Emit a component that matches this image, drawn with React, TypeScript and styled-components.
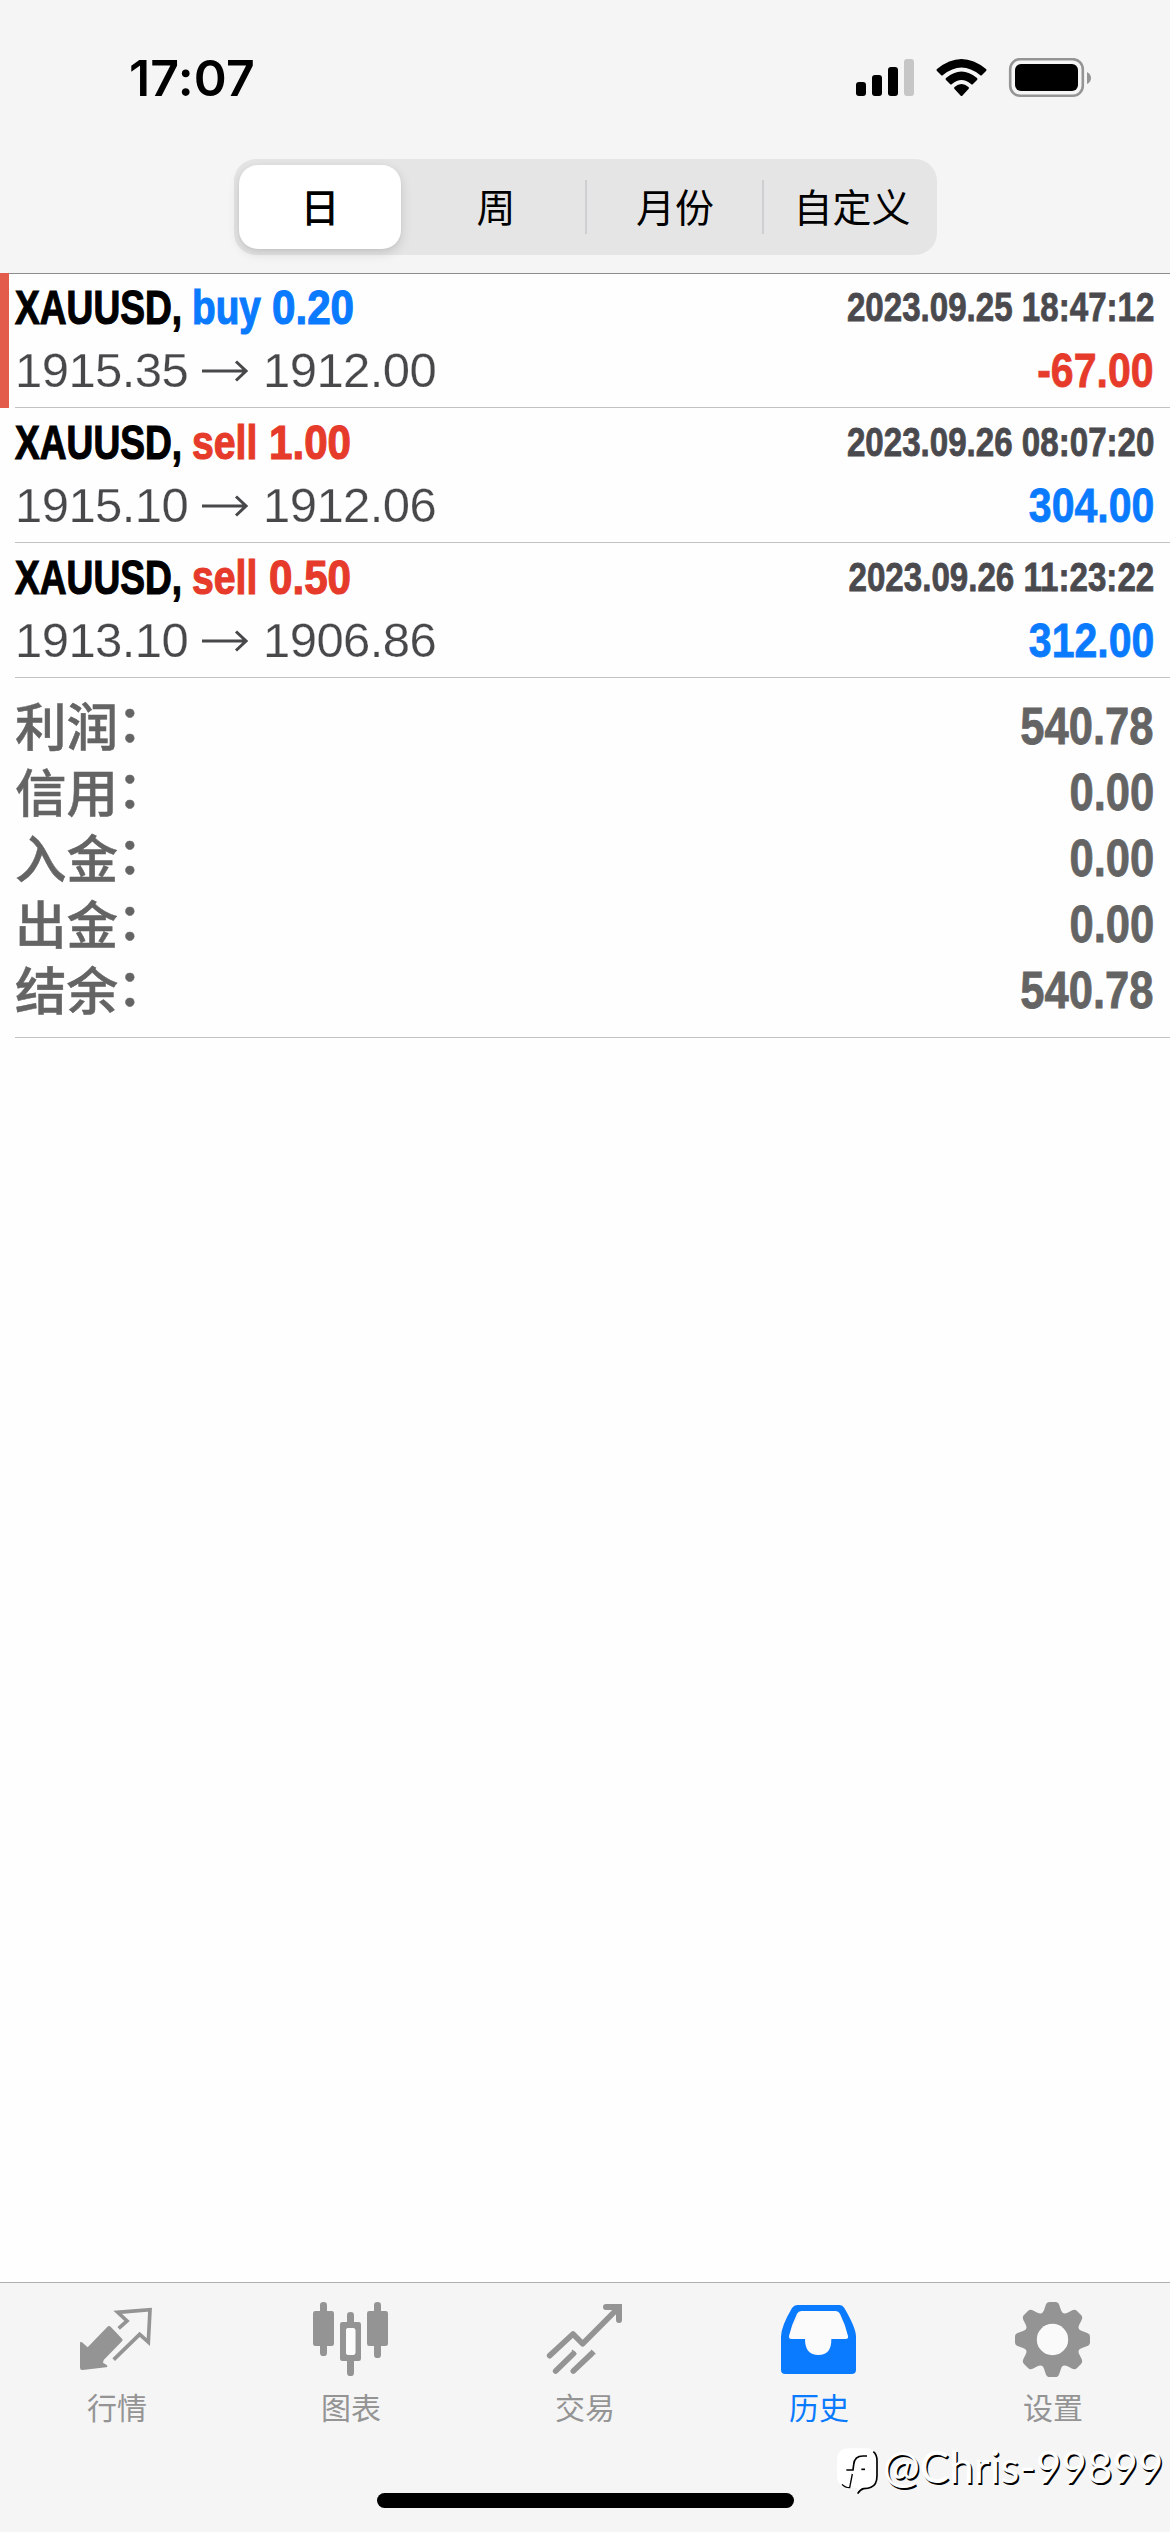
import React from 'react';
import styled, { createGlobalStyle, css } from 'styled-components';

const BLUE = '#0a7aff';
const RED = '#e63b2b';
const GREY = '#949494';

const GlobalStyle = createGlobalStyle`
  * { box-sizing: border-box; }
  html, body { margin: 0; padding: 0; background: #fff; }
  body { font-family: 'Liberation Sans', 'Noto Sans CJK SC', sans-serif; }
`;

const Screen = styled.div`
  width: 1170px;
  height: 2532px;
  display: flex;
  flex-direction: column;
  background: #fefefe;
  overflow: hidden;
`;

const Header = styled.header`
  height: 274px;
  flex: none;
  background: #f5f5f5;
  border-bottom: 1px solid #8c8c8c;
`;

const StatusBar = styled.div`
  height: 159px;
  display: flex;
  justify-content: space-between;
  padding: 0 78px 3px 129px;
  align-items: center;
`;

const Clock = styled.time`
  font: 600 50px/60px Inter, 'Liberation Sans', sans-serif;
  letter-spacing: 0.2px;
  color: #000;
`;

const StatusIcons = styled.svg`
  display: block;
  width: 236px;
  height: 40px;
`;

const Segments = styled.nav`
  width: 703px;
  height: 96px;
  margin: 0 0 0 234px;
  padding: 6px 0 6px 5px;
  display: flex;
  border-radius: 22px;
  background: #e5e5e6;
`;

const Segment = styled.button<{ $selected?: boolean; $divider?: boolean }>`
  position: relative;
  flex: none;
  width: 178px;
  height: 84px;
  padding: 0 0 4px;
  border: 0;
  background: transparent;
  color: #000;
  font: 400 39px/80px 'Noto Sans CJK SC', sans-serif;
  ${(p) =>
    p.$selected &&
    css`
      width: 162px;
      margin-right: 6px;
      border-radius: 19px;
      background: #fff;
      font-weight: 500;
      box-shadow: 0 4px 12px rgba(0, 0, 0, 0.14), 0 1px 3px rgba(0, 0, 0, 0.04);
    `}
  ${(p) =>
    p.$divider &&
    css`
      width: 177px;
      padding-left: 3px;
      &::before {
        content: '';
        position: absolute;
        left: 0;
        top: 15px;
        width: 2px;
        height: 54px;
        background: #cfcfd1;
      }
    `}
`;

const Main = styled.main`
  flex: 1;
`;

const Deal = styled.article<{ $marked?: boolean }>`
  height: 135px;
  display: grid;
  grid-template-columns: 15px 1fr;
  background: ${(p) =>
    p.$marked ? 'linear-gradient(90deg, #e25b4b 9px, transparent 9px)' : 'none'};
  margin-top: ${(p) => (p.$marked ? '-1px' : '0')};
`;

const DealBody = styled.div`
  grid-column: 2;
  padding: 3px 16px 0 0;
  border-bottom: 1px solid #c2c2c4;
`;

const Line = styled.div<{ $h: number }>`
  height: ${(p) => p.$h}px;
  display: flex;
  align-items: center;
`;

/* Condensed lettering: $w is the drawn width, $sx the horizontal squeeze. */
const Word = styled.span<{ $w: number; $sx: number; $color: string }>`
  width: ${(p) => p.$w / p.$sx}px;
  margin-right: ${(p) => p.$w - p.$w / p.$sx}px;
  transform: scaleX(${(p) => p.$sx});
  transform-origin: left center;
  white-space: nowrap;
  font: 700 49px/60px 'Liberation Sans', Arial, sans-serif;
  -webkit-text-stroke: 1.2px ${(p) => p.$color};
  color: ${(p) => p.$color};
`;

const Figure = styled.span<{ $size: number; $sx: number; $color: string }>`
  margin-left: auto;
  transform: scaleX(${(p) => p.$sx});
  transform-origin: right center;
  white-space: nowrap;
  font: 700 ${(p) => p.$size}px/60px 'Liberation Sans', Arial, sans-serif;
  -webkit-text-stroke: 0.8px ${(p) => p.$color};
  color: ${(p) => p.$color};
`;

const Price = styled.span`
  width: 173px;
  white-space: nowrap;
  font: 400 49px/60px 'Liberation Sans', Arial, sans-serif;
  letter-spacing: -0.55px;
  color: #48484b;
  -webkit-text-stroke: 0.25px #fefefe;
`;

const Arrow = styled.svg`
  width: 47px;
  height: 22px;
  margin: 2px 15px 0 13px;
`;

const Summary = styled.section`
  height: 360px;
  margin-left: 15px;
  padding: 15px 16px 0 0;
  border-bottom: 1px solid #c2c2c4;
`;

const SummaryLabel = styled.span`
  padding-top: 3px;
  font: 500 51.5px/66px 'Liberation Sans', 'Noto Sans CJK SC', sans-serif;
  -webkit-text-stroke: 0.5px #646464;
  color: #646464;
`;

const Colon = styled.span`
  display: inline-block;
  transform: translate(-1px, -4px);
`;

const TabBar = styled.nav`
  height: 250px;
  flex: none;
  display: grid;
  grid-template-columns: repeat(5, 234px);
  border-top: 1px solid #b0b0b2;
  background: #f5f5f5;
  position: relative;
`;

const Tab = styled.a<{ $active?: boolean }>`
  padding-top: 15px;
  display: flex;
  flex-direction: column;
  align-items: center;
  color: ${(p) => (p.$active ? BLUE : GREY)};
  font: 400 30px/40px 'Noto Sans CJK SC', sans-serif;
`;

const TabIcon = styled.svg`
  width: 100px;
  height: 84px;
  margin-bottom: 4px;
`;

const HomeIndicator = styled.div`
  position: absolute;
  left: 377px;
  bottom: 24px;
  width: 417px;
  height: 15px;
  border-radius: 8px;
  background: #000;
`;

const Watermark = styled.div`
  position: absolute;
  left: 836px;
  top: 162px;
  display: flex;
  align-items: flex-start;
  color: #fff;
  font: 400 44px/43px Lato, sans-serif;
  white-space: nowrap;
  text-shadow: 1.5px 1.5px 0 #000;
`;

const WatermarkLogo = styled.svg`
  width: 46px;
  height: 50px;
  margin-right: 1px;
`;

const deals = [
  { side: 'buy', volume: '0.20', open: '1915.35', close: '1912.00', time: '2023.09.25 18:47:12', profit: '-67.00' },
  { side: 'sell', volume: '1.00', open: '1915.10', close: '1912.06', time: '2023.09.26 08:07:20', profit: '304.00' },
  { side: 'sell', volume: '0.50', open: '1913.10', close: '1906.86', time: '2023.09.26 11:23:22', profit: '312.00' },
];

const totals = [
  ['利润', '540.78'],
  ['信用', '0.00'],
  ['入金', '0.00'],
  ['出金', '0.00'],
  ['结余', '540.78'],
];

const QuotesIcon = () => (
  <TabIcon viewBox="81 84 300 252" fill="currentColor">
    <path d="M204 169q4-3 8 1l34 36q4 4 0 8l-55 56-2 8 11 7q5 5-2 7l-70 8q-8 1-8-7v-72q0-9 6-4l17 15z" />
    <path d="M236 175l25-22-28-26 97-8-5 97-26-23-78 76" fill="none" stroke="currentColor" strokeWidth="11" />
  </TabIcon>
);

const ChartIcon = () => (
  <TabIcon viewBox="783 84 300 252" fill="currentColor">
    <rect x="840" y="96" width="21" height="162" rx="10" />
    <rect x="819" y="123" width="63" height="105" rx="7" />
    <rect x="1002" y="96" width="21" height="168" rx="10" />
    <rect x="981" y="123" width="63" height="105" rx="7" />
    <rect x="921" y="126" width="21" height="40" rx="10" />
    <rect x="921" y="262" width="21" height="56" rx="10" />
    <path fillRule="evenodd" d="M907 156h49q7 0 7 7v103q0 7-7 7h-49q-7 0-7-7V163q0-7 7-7zm19 18q-8 0-8 8v65q0 8 8 8h12q8 0 8-8v-65q0-8-8-8z" />
    <rect x="918" y="174" width="28" height="81" rx="8" fill="#fbfbfb" />
  </TabIcon>
);

const TradeIcon = () => (
  <TabIcon viewBox="105 84 300 252" fill="none" stroke="currentColor" strokeWidth="17" strokeLinecap="round" strokeLinejoin="round">
    <path d="M149 257l70-65 29 29L354 115" />
    <path d="M318 111h39v39" strokeWidth="18" />
    <path d="M348 102h18v18z" stroke="none" fill="currentColor" />
    <path d="M167 303l53-52" />
    <path d="M220 303l55-52" />
    <path d="M216 240l13 13M273 240l13 13" strokeWidth="4" strokeLinecap="butt" />
  </TabIcon>
);

const HistoryIcon = () => (
  <TabIcon viewBox="807 84 300 252" fill="currentColor">
    <path d="M904 120h107l38 87h-56v50h-78v-50h-56z" fill="#fbfbfb" />
    <path fillRule="evenodd" d="M892 105h127q9 0 14 9 35 60 35 86v99q0 13-13 13H856q-13 0-13-13v-99q0-30 33-86 6-9 16-9zm12 18q-9 0-13 8-16 32-24 67-1 9 7 9h41q0 48 40 48t39-48h43q9 0 7-9-8-35-24-67-4-8-13-8z" />
  </TabIcon>
);

const SettingsIcon = () => (
  <TabIcon viewBox="609 84 300 252">
    <g fill="currentColor">
      {[0, 45, 90, 135, 180, 225, 270, 315].map((angle) => (
        <path
          key={angle}
          transform={`rotate(${angle} 757.5 208.500)`}
          d="M718 134q12-4 15-16l4-12q3-10 12-10h17q9 0 12 10l4 12q3 12 15 16l-10 30h-59z"
        />
      ))}
    </g>
    <circle cx="757.5" cy="208.500" r="64" fill="none" stroke="currentColor" strokeWidth="34" />
    <circle cx="757.5" cy="208.500" r="47" fill="#fafafa" />
  </TabIcon>
);

const tabs = [
  { label: '行情', Icon: QuotesIcon },
  { label: '图表', Icon: ChartIcon },
  { label: '交易', Icon: TradeIcon },
  { label: '历史', Icon: HistoryIcon, active: true },
  { label: '设置', Icon: SettingsIcon },
];

export default function App() {
  return (
    <Screen>
      <GlobalStyle />
      <Header>
        <StatusBar>
          <Clock>17:07</Clock>
          <StatusIcons viewBox="856 58 236 40">
            <rect x="856" y="82" width="10" height="14" rx="3" />
            <rect x="872" y="75" width="10" height="21" rx="3" />
            <rect x="888" y="67" width="10" height="29" rx="3" />
            <rect x="904" y="59" width="10" height="37" rx="3" fill="#c6c6c6" />
            <path d="M937 69Q961.500 49 986 69q1 1 0 2l-4 4q-1 1-2 0-18.500-15-37 0-1 1-2 0l-4-4q-1-1 0-2z" />
            <path d="M946 78q15.500-13 31 0 1 1 0 2l-4 4q-1 1-2 0-9.500-8-19 0-1 1-2 0l-4-4q-1-1 0-2z" />
            <path d="M954.500 87q7-6 14 0 1 1 0 2l-6 6.500q-1 1-2 0l-6-6.500q-1-1 0-2z" />
            <rect x="1010.200" y="59.200" width="72.600" height="36.600" rx="10" fill="none" stroke="#959595" strokeWidth="2.600" />
            <rect x="1015" y="64" width="63" height="27" rx="6" />
            <path d="M1087 72q4 2 4 6t-4 6z" fill="#959595" />
          </StatusIcons>
        </StatusBar>
        <Segments>
          <Segment $selected>日</Segment>
          <Segment>周</Segment>
          <Segment $divider>月份</Segment>
          <Segment $divider>自定义</Segment>
        </Segments>
      </Header>
      <Main>
        {deals.map((d, i) => {
          const buy = d.side === 'buy';
          const tone = buy ? BLUE : RED;
          return (
            <Deal key={d.time} $marked={i === 0}>
              <DealBody>
                <Line $h={62}>
                  <Word $w={177} $sx={0.758} $color="#000">XAUUSD,</Word>
                  <Word $w={buy ? 79.500 : 77} $sx={buy ? 0.79 : 0.8} $color={tone}>{d.side}</Word>
                  <Word $w={83} $sx={0.86} $color={tone}>{d.volume}</Word>
                  <Figure $size={40} $sx={0.828} $color="#4a4a4e">{d.time}</Figure>
                </Line>
                <Line $h={64}>
                  <Price>{d.open}</Price>
                  <Arrow viewBox="0 0 47 22" fill="none" stroke="#48484b" strokeWidth="3">
                    <path d="M1 11h44M35 1.500l10 9.500-10 9.500" />
                  </Arrow>
                  <Price>{d.close}</Price>
                  <Figure $size={48.500} $sx={0.846} $color={d.profit.startsWith('-') ? RED : BLUE}>{d.profit}</Figure>
                </Line>
              </DealBody>
            </Deal>
          );
        })}
        <Summary>
          {totals.map(([label, value]) => (
            <Line key={label} $h={66}>
              <SummaryLabel>
                {label}
                <Colon>：</Colon>
              </SummaryLabel>
              <Figure $size={51.500} $sx={0.846} $color="#646464">{value}</Figure>
            </Line>
          ))}
        </Summary>
      </Main>
      <TabBar>
        {tabs.map(({ label, Icon, active }) => (
          <Tab key={label} $active={active}>
            <Icon />
            {label}
          </Tab>
        ))}
        <HomeIndicator />
        <Watermark>
          <WatermarkLogo viewBox="45 45 138 150" fill="none" strokeLinecap="butt">
            <path d="M84 55h50q32 0 32 32v54q0 28-30 32-16 2-27 16l1-16H88q-40 0-40-36V91q0-36 36-36z" fill="#fff" />
            <path d="M157 65q11 9 11 27v45q0 27-18 35-8 4-22 4-10 2-18 15" stroke="#000" strokeWidth="5" />
            <path d="M138 78h-12q-26 0-28 26l-2 16H76" stroke="#000" strokeWidth="5" />
            <path d="M94 132l-8 41q-14 0-23-10" stroke="#000" strokeWidth="4" />
            <path d="M121 118h11" stroke="#000" strokeWidth="5" />
          </WatermarkLogo>
          @Chris-99899
        </Watermark>
      </TabBar>
    </Screen>
  );
}
